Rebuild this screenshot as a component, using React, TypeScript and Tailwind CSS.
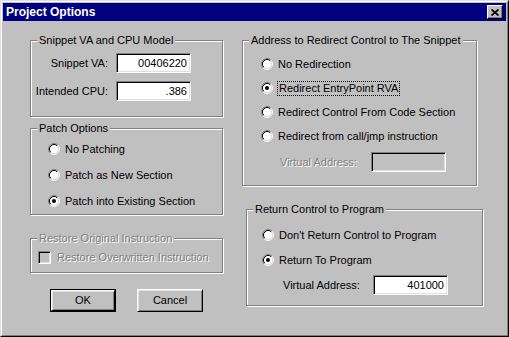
import React from "react";

type GroupProps = {
    title: string;
    disabled?: boolean;
    className?: string;
    children?: React.ReactNode;
}

const Radio = ({ checked }: { checked?: boolean }) => (
    <svg width="12" height="12" viewBox="0 0 12 12" className="shrink-0">
        <circle cx="6" cy="6" r="4.5" fill="#fff" />
        <path d="M2.11 9.89 A5.5 5.5 0 0 1 9.89 2.11" stroke="#808080" fill="none" />
        <path d="M9.89 2.11 A5.5 5.5 0 0 1 2.11 9.89" stroke="#fff" fill="none" />
        <path d="M2.82 9.18 A4.5 4.5 0 0 1 9.18 2.82" stroke="#000" fill="none" />
        <path d="M9.18 2.82 A4.5 4.5 0 0 1 2.82 9.18" stroke="#dfdfdf" fill="none" />
        {checked && <circle cx="6" cy="6" r="2" fill="#000" />}
    </svg>
);

// etched group box, caption sits on the top line
const GroupBox = (props: GroupProps) => (
    <div className={"border border-[#808080] shadow-[1px_1px_0_#fff,inset_1px_1px_0_#fff] " + (props.className ?? "")}>
        <div className={"-mt-[7px] ml-[6px] w-fit bg-[#c0c0c0] px-[2px] leading-[13px] " +
            (props.disabled ? "text-[#808080] [text-shadow:1px_1px_0_#fff]" : "")}>
            {props.title}
        </div>
        {props.children}
    </div>
);

const Field = ({ value, disabled }: { value?: string; disabled?: boolean }) => (
    <div className={"flex h-[20px] w-[75px] items-center justify-end border border-t-[#808080] border-l-[#808080] border-r-white border-b-white pr-[3px] shadow-[inset_1px_1px_0_#000,inset_-1px_-1px_0_#dfdfdf] " +
        (disabled ? "bg-[#c0c0c0]" : "bg-white")}>
        {value}
    </div>
);

const PushButton = ({ label, isDefault }: { label: string; isDefault?: boolean }) => (
    <div className={"h-[23px] w-[66px] " + (isDefault ? "border border-black" : "")}>
        <div className="flex h-full w-full items-center justify-center border border-t-white border-l-white border-r-black border-b-black shadow-[inset_1px_1px_0_#dfdfdf,inset_-1px_-1px_0_#808080]">
            {label}
        </div>
    </div>
);

const RadioRow = ({ label, checked, focused, className }: { label: string; checked?: boolean; focused?: boolean; className?: string }) => (
    <div className={"flex items-center " + (className ?? "")}>
        <Radio checked={checked} />
        <span className={focused ? "ml-[4px] border border-dotted border-black px-[1px] leading-[13px]" : "ml-[5px]"}>{label}</span>
    </div>
);

export default function App() {
    return (
        <div className="h-[337px] w-[509px] border border-t-[#dfdfdf] border-l-[#dfdfdf] border-r-black border-b-black bg-[#c0c0c0] font-['Liberation_Sans',Arial,sans-serif] text-[11px] text-black">
            <div className="h-full w-full border border-t-white border-l-white border-r-[#808080] border-b-[#808080] p-[1px]">
                {/* title bar */}
                <div className="flex h-[18px] items-center justify-between bg-[#000080] pl-[3px] pr-[3px]">
                    <span className="text-[12px] font-bold text-white">Project Options</span>
                    <div className="flex h-[14px] w-[16px] items-center justify-center border border-t-white border-l-white border-r-black border-b-black bg-[#c0c0c0] shadow-[inset_-1px_-1px_0_#808080]">
                        <svg width="8" height="7" viewBox="0 0 8 7">
                            <path d="M0.5 0.5 L7.5 6.5 M7.5 0.5 L0.5 6.5" stroke="#000" strokeWidth="1.7" />
                        </svg>
                    </div>
                </div>

                <div className="flex gap-[19px] pl-[27px] pt-[19px]">
                    {/* left column */}
                    <div className="flex w-[193px] flex-col">
                        <GroupBox title="Snippet VA and CPU Model" className="pb-[15px]">
                            <div className="mt-[6px] flex items-center">
                                <span className="w-[77px] text-right">Snippet VA:</span>
                                <div className="ml-[8px]"><Field value="00406220" /></div>
                            </div>
                            <div className="mt-[8px] flex items-center">
                                <span className="w-[77px] text-right">Intended CPU:</span>
                                <div className="ml-[8px]"><Field value=".386" /></div>
                            </div>
                        </GroupBox>

                        <GroupBox title="Patch Options" className="mt-[11px]">
                            <div className="mt-[1px] flex flex-col pl-[17px]">
                                <RadioRow label="No Patching" className="h-[26px]" />
                                <RadioRow label="Patch as New Section" className="h-[26px]" />
                                <RadioRow label="Patch into Existing Section" checked className="h-[26px]" />
                            </div>
                        </GroupBox>

                        <GroupBox title="Restore Original Instruction" disabled className="mt-[23px] pb-[6px]">
                            <div className="mt-[4px] flex items-center pl-[7px]">
                                <div className="h-[13px] w-[13px] border border-t-[#808080] border-l-[#808080] border-r-white border-b-white shadow-[inset_1px_1px_0_#000,inset_-1px_-1px_0_#dfdfdf]" />
                                <span className="ml-[6px] text-[#808080] [text-shadow:1px_1px_0_#fff]">Restore Overwritten Instruction</span>
                            </div>
                        </GroupBox>

                        <div className="mt-[16px] flex gap-[21px] pl-[20px]">
                            <PushButton label="OK" isDefault />
                            <PushButton label="Cancel" />
                        </div>
                    </div>

                    {/* right column */}
                    <div className="flex flex-col">
                        <GroupBox title="Address to Redirect Control to The Snippet" className="w-[235px] pb-[13px]">
                            <div className="mt-[5px] flex flex-col pl-[18px]">
                                <RadioRow label="No Redirection" className="h-[24px]" />
                                <RadioRow label="Redirect EntryPoint RVA" checked focused className="h-[24px]" />
                                <RadioRow label="Redirect Control From Code Section" className="h-[24px]" />
                                <RadioRow label="Redirect from call/jmp instruction" className="h-[24px]" />
                            </div>
                            <div className="mt-[4px] flex items-center pl-[37px]">
                                <span className="w-[91px] text-[#808080] [text-shadow:1px_1px_0_#fff]">Virtual Address:</span>
                                <Field disabled />
                            </div>
                        </GroupBox>

                        <GroupBox title="Return Control to Program" className="ml-[4px] mt-[23px] w-[237px] pb-[10px]">
                            <div className="mt-[6px] flex flex-col pl-[15px]">
                                <RadioRow label="Don't Return Control to Program" className="h-[26px]" />
                                <RadioRow label="Return To Program" checked className="h-[24px]" />
                            </div>
                            <div className="mt-[3px] flex items-center pl-[36px]">
                                <span className="w-[90px]">Virtual Address:</span>
                                <Field value="401000" />
                            </div>
                        </GroupBox>
                    </div>
                </div>
            </div>
        </div>
    );
}
